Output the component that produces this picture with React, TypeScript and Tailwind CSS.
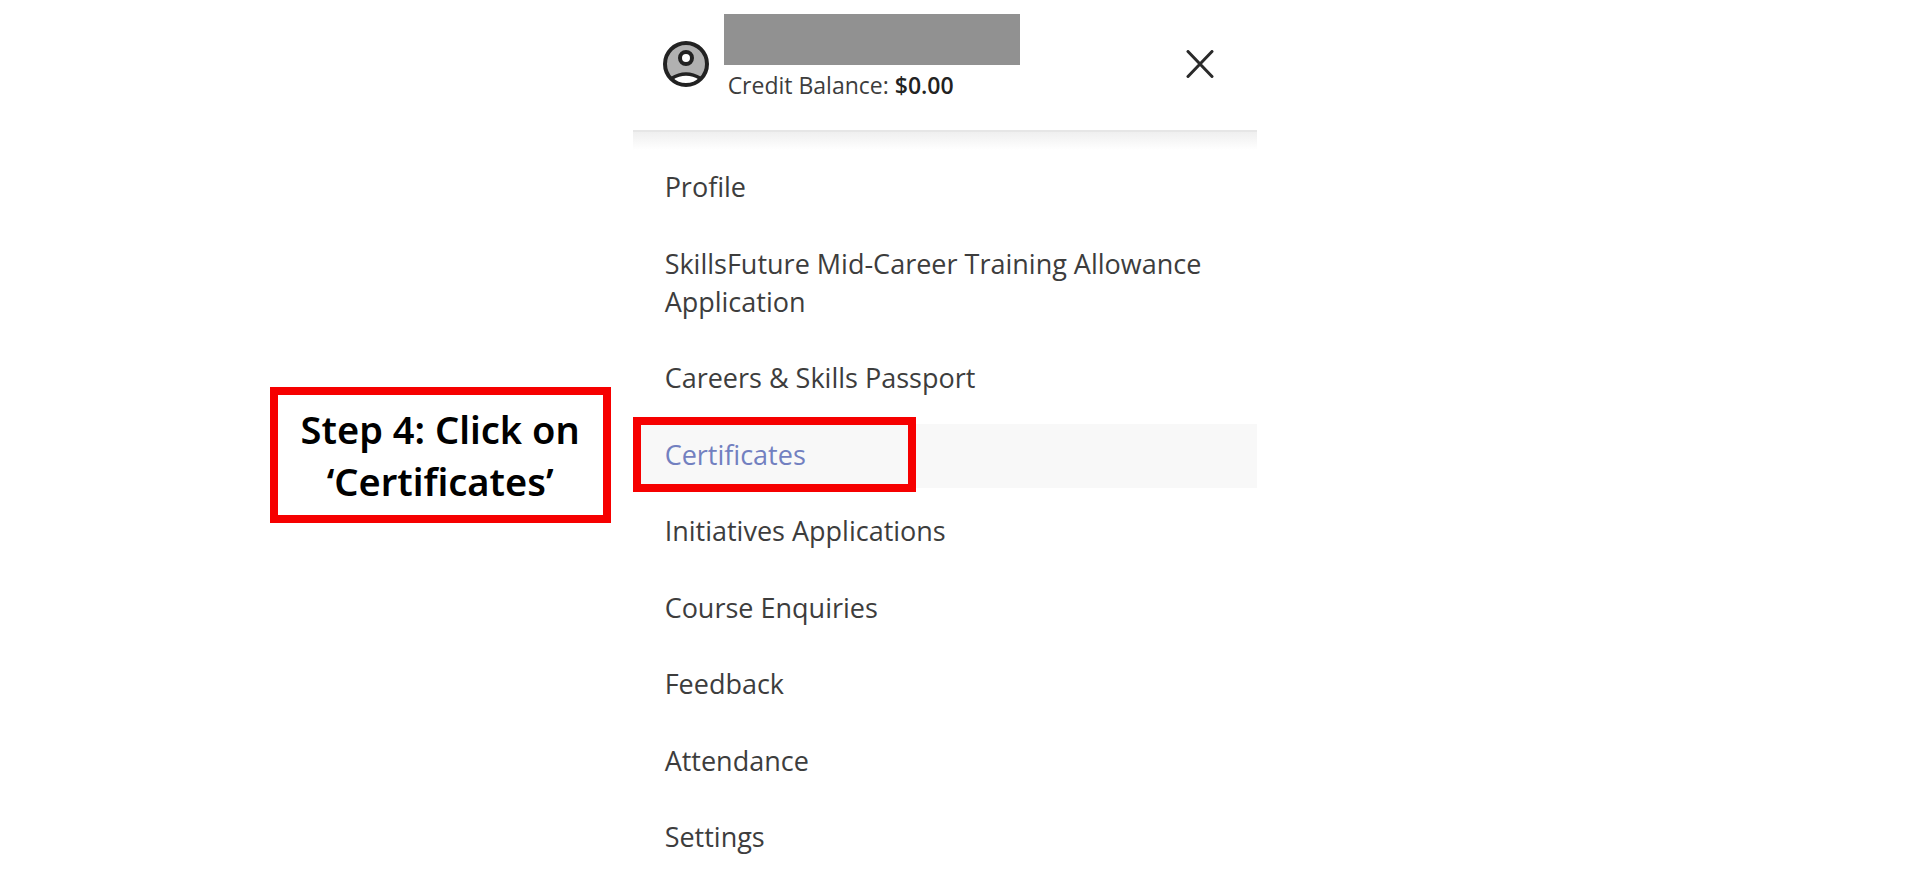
import { useState } from "react";
import clsx from "clsx";

const menuItems = [
  "Profile",
  "SkillsFuture Mid-Career Training Allowance Application",
  "Careers & Skills Passport",
  "Certificates",
  "Initiatives Applications",
  "Course Enquiries",
  "Feedback",
  "Attendance",
  "Settings",
];

function AccountIcon() {
  return (
    <svg viewBox="0 0 46 46" className="size-[46px] shrink-0" fill="none" aria-hidden="true">
      <circle cx="23" cy="23" r="21" fill="#b1b1b1" />
      <path d="M9 37.5Q23 28.5 37 37.5Q31 44 23 44Q15 44 9 37.5Z" fill="#fff" />
      <path d="M8.5 37.5Q23 28.5 37.5 37.5" stroke="#222" strokeWidth="3.6" />
      <circle cx="23" cy="17" r="6" fill="#fff" stroke="#222" strokeWidth="4" />
      <circle cx="23" cy="23" r="21" stroke="#222" strokeWidth="4" />
    </svg>
  );
}

function CloseIcon() {
  return (
    <svg viewBox="0 0 28 28" className="size-7" fill="none" aria-hidden="true">
      <path d="M2 1.5L26 26.5M26 1.5L2 26.5" stroke="#2a2a2a" strokeWidth="3" strokeLinecap="round" />
    </svg>
  );
}

export default function App() {
  const [active, setActive] = useState("Certificates");

  return (
    <div className="flex min-h-screen bg-white font-['Open_Sans',sans-serif]">
      <aside className="flex w-[32.95%] shrink-0 items-center justify-end pt-5 pr-[22px]">
        <p className="w-[341px] border-[8px] border-[#f60000] py-2 text-center font-['Noto_Sans',sans-serif] text-[38px] leading-[52px] font-semibold text-black">
          Step 4: Click on
          <br />
          ‘Certificates’
        </p>
      </aside>

      <main className="flex w-[624px] flex-col">
        <header className="flex h-[130px] items-start justify-between pt-3.5 pr-[43px] pl-[30px]">
          <div className="flex gap-[15px]">
            <div className="pt-[27px]">
              <AccountIcon />
            </div>
            <div>
              <div className="h-[51px] w-[296px] bg-[#919191]" />
              <p className="pt-1.5 pl-1 text-[23px] leading-7 text-[#3d3d3d]">
                Credit Balance: <strong className="font-semibold text-[#222]">$0.00</strong>
              </p>
            </div>
          </div>
          <button type="button" aria-label="Close menu" className="mt-9">
            <CloseIcon />
          </button>
        </header>

        <div className="h-5 border-t-2 border-[#e6e6e6] bg-linear-to-b from-[#efefef] to-white" />

        <nav className="flex flex-1 flex-col pt-1.5 pb-5">
          <ul className="flex flex-1 flex-col justify-between">
            {menuItems.map((item) => (
              <li key={item} className="relative">
                <a
                  href="#"
                  onClick={(e) => {
                    e.preventDefault();
                    setActive(item);
                  }}
                  className={clsx(
                    "block pt-3 pr-8 pb-3.5 pl-8 text-[27px] leading-[38px]",
                    item === active ? "bg-[#f8f8f8] text-[#7280c0]" : "text-[#3d3d3d]"
                  )}
                >
                  {item}
                </a>
                {item === "Certificates" && (
                  <span className="pointer-events-none absolute -top-[7px] -bottom-1 left-0 w-[283px] border-[8px] border-[#f60000]" />
                )}
              </li>
            ))}
          </ul>
        </nav>
      </main>
    </div>
  );
}
